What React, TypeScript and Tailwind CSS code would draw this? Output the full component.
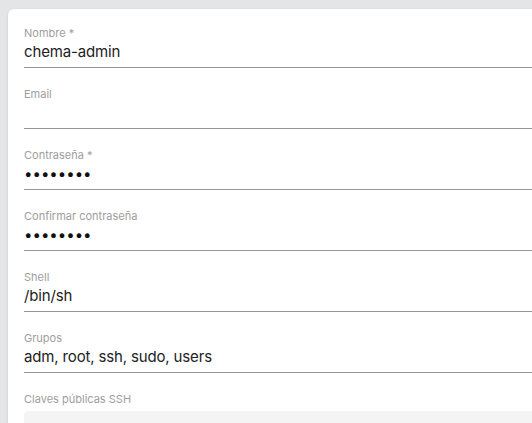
export default function App() {
  const fields = [
    { label: 'Nombre *', value: 'chema-admin' },
    { label: 'Email', value: '' },
    { label: 'Contraseña *', value: '••••••••', secret: true },
    { label: 'Confirmar contraseña', value: '••••••••', secret: true },
    { label: 'Shell', value: '/bin/sh' },
    { label: 'Grupos', value: 'adm, root, ssh, sudo, users' },
  ]

  return (
    <div className="h-[423px] w-[532px] overflow-hidden bg-[#e4e5e7] pl-2 pt-[9px] font-['Inter',sans-serif]">
      <div className="h-[600px] w-[560px] rounded-md bg-white pl-4 pt-4 shadow-sm">
        {fields.map((f) => (
          <div key={f.label} className="mb-[18px]">
            <div className="text-[11px] leading-4 text-[#9e9e9e]">{f.label}</div>
            <div className="h-[27px] border-b border-[#959595] text-[15px] leading-[22px] tracking-[-0.15px] text-[#222]">
              {f.secret ? <span className="tracking-normal text-[#111]">{f.value}</span> : f.value}
            </div>
          </div>
        ))}
        <div>
          <div className="text-[11px] leading-4 text-[#9e9e9e]">Claves públicas SSH</div>
          <div className="mt-1 h-24 rounded-sm bg-[#f4f4f4]" />
        </div>
      </div>
    </div>
  )
}
